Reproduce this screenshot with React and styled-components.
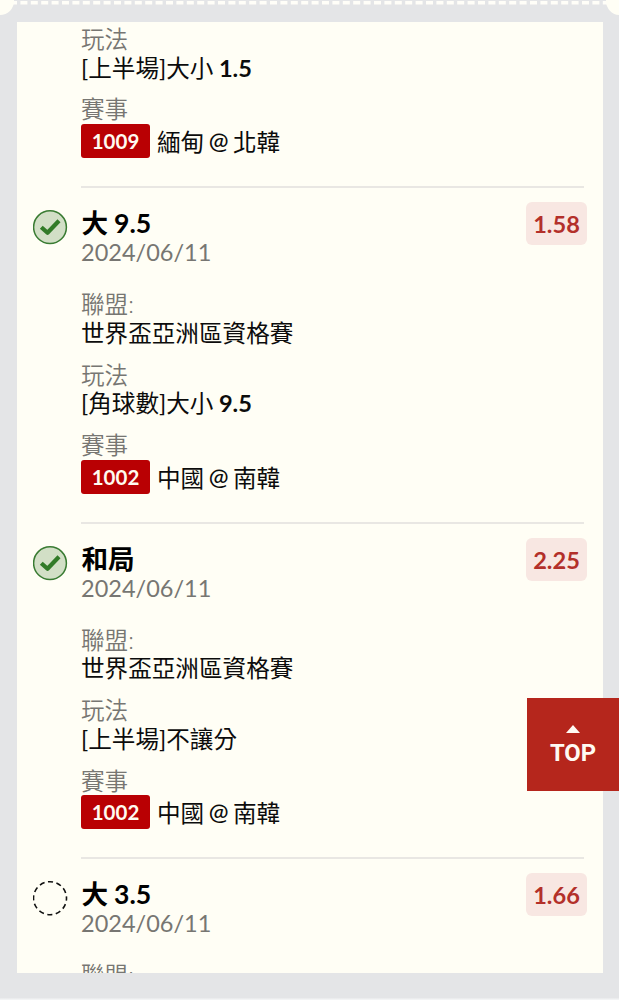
import React from "react";
import styled, { createGlobalStyle } from "styled-components";

const GlobalStyle = createGlobalStyle`
  * { box-sizing: border-box; }
  body { margin: 0; background: #f4f4f5; }
`;

const Slip = styled.div`
  position: relative;
  height: 1000px;
  padding: 22px 16.5px 0 17px;
  overflow: hidden;
  background: linear-gradient(#e4e5e7 0 998px, #f3f4f5 999px);
  font-family: Lato, "Noto Sans CJK TC", sans-serif;
  color: #0c0c0c;
`;

const Perforation = styled.svg`
  position: absolute;
  top: 0;
  left: 0;
  display: block;
`;

const Card = styled.div`
  height: 951px;
  padding: 3px 18.5px 0 16px;
  overflow: hidden;
  background: #fffef5;
`;

const Selection = styled.section`
  display: grid;
  grid-template-columns: 48px 1fr;
`;

const StatusCell = styled.div`
  padding-top: 21px;
`;

const StatusIcon = styled.svg`
  display: block;
`;

const Details = styled.div`
  height: ${(p) => (p.$partial ? "163.4px" : "335.4px")};
  padding-top: ${(p) => (p.$partial ? 0 : "21px")};
  border-bottom: 2px solid #e9e7e3;
`;

const Heading = styled.header`
  display: flex;
  justify-content: space-between;
  align-items: flex-start;
  height: 81px;
`;

const Title = styled.h2`
  margin: 0;
  padding-left: 0.5px;
  font-size: 26.6px;
  line-height: 29px;
  font-weight: 700;
  white-space: nowrap;
  word-spacing: -0.5px;
  color: #000;
`;

const PlacedOn = styled.div`
  font-size: 23.5px;
  line-height: 29px;
  color: #777672;
`;

const Odds = styled.div`
  width: 61px;
  height: 43px;
  margin: -7px -3px 0 0;
  border-radius: 6px;
  background: #f8e7e2;
  color: #b3302a;
  font-size: 23.6px;
  line-height: 44px;
  font-weight: 700;
  text-align: center;
`;

const Field = styled.div`
  margin-bottom: 13.4px;
  font-size: 23.6px;
  line-height: 28.5px;
  white-space: nowrap;
`;

const Label = styled.div`
  color: #777672;
  font-weight: 350;
`;

const Value = styled.div`
  display: flex;
  align-items: center;
  strong { font-weight: 700; margin-left: 5.5px; }
`;

const MatchCode = styled.span`
  width: 69px;
  height: 34px;
  margin-right: 7px;
  border-radius: 3px;
  background: #b90003;
  color: #fffaf0;
  font-size: 20.5px;
  line-height: 35px;
  font-weight: 700;
  text-align: center;
`;

const Teams = styled.span`
  padding-top: 3px;
  word-spacing: -1.6px;
`;

const Versus = styled.span`
  font-weight: 500;
  line-height: 20px;
  vertical-align: 2px;
`;

const TopButton = styled.button`
  position: absolute;
  right: 0;
  top: 698px;
  width: 92px;
  height: 93px;
  display: flex;
  flex-direction: column;
  align-items: center;
  padding: 27px 0 0;
  border: 0;
  background: #b5261c;
  color: #fffaf3;
  font: 700 23.8px/28px Roboto, sans-serif;
`;

const Caret = styled.svg`
  display: block;
  margin-bottom: 6px;
`;

const selections = [
  { play: "[上半場]大小", line: "1.5", code: "1009", teams: ["緬甸", "北韓"], partial: true },
  { title: "大 9.5", odds: "1.58", won: true, play: "[角球數]大小", line: "9.5", code: "1002", teams: ["中國", "南韓"] },
  { title: "和局", odds: "2.25", won: true, play: "[上半場]不讓分", code: "1002", teams: ["中國", "南韓"] },
  { title: "大 3.5", odds: "1.66", cut: true },
];

function Status({ won }) {
  return (
    <StatusIcon width="36" height="36" viewBox="0 0 36 36" fill="none">
      {won ? (
        <>
          <circle cx="17" cy="18.2" r="16.4" fill="#d2dfc6" stroke="#397b32" strokeWidth="1.5" />
          <path d="M8.3 18.2 14.5 23.8 26 11.8" stroke="#327b28" strokeWidth="4.2" strokeLinejoin="round" />
        </>
      ) : (
        <circle cx="17" cy="18.2" r="16.5" stroke="#111" strokeWidth="1.6" strokeDasharray="5.2 3.44" strokeDashoffset="2.6" />
      )}
    </StatusIcon>
  );
}

function BetSelection({ item }) {
  return (
    <Selection>
      <StatusCell>{!item.partial && <Status won={item.won} />}</StatusCell>
      <Details $partial={item.partial}>
        {!item.partial && (
          <>
            <Heading>
              <div>
                <Title>{item.title}</Title>
                <PlacedOn>2024/06/11</PlacedOn>
              </div>
              <Odds>{item.odds}</Odds>
            </Heading>
            <Field>
              <Label>聯盟:</Label>
              {!item.cut && <Value>世界盃亞洲區資格賽</Value>}
            </Field>
          </>
        )}
        {!item.cut && (
          <>
            <Field>
              <Label>玩法</Label>
              <Value>{item.play}{item.line && <strong>{item.line}</strong>}</Value>
            </Field>
            <Field>
              <Label>賽事</Label>
              <Value>
                <MatchCode>{item.code}</MatchCode>
                <Teams>
                  {item.teams[0]} <Versus>@</Versus> {item.teams[1]}
                </Teams>
              </Value>
            </Field>
          </>
        )}
      </Details>
    </Selection>
  );
}

export default function App() {
  return (
    <>
      <GlobalStyle />
      <Slip>
        <Perforation width="619" height="20">
          <path d="M10 2.8H610" stroke="#fffef8" strokeWidth="3.4" strokeDasharray="7 3.4" />
          <circle cx="0" cy="1" r="14" fill="#fffef5" />
          <circle cx="620" cy="1" r="14" fill="#fffef5" />
        </Perforation>
        <Card>
          {selections.map((item, i) => (
            <BetSelection key={i} item={item} />
          ))}
        </Card>
        <TopButton>
          <Caret width="14" height="8" viewBox="0 0 14 8">
            <path d="M0 8 7 0l7 8Z" fill="currentColor" />
          </Caret>
          TOP
        </TopButton>
      </Slip>
    </>
  );
}
